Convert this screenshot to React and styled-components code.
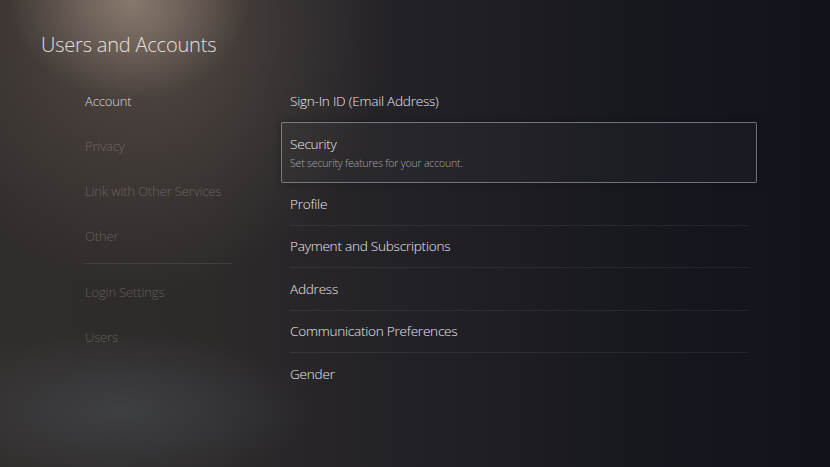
import styled, { createGlobalStyle } from "styled-components"

const Global = createGlobalStyle`
  html, body, #root {
    margin: 0;
    padding: 0;
    height: 100%;
  }
  body {
    background: #15161d;
    font-family: "Open Sans", "Noto Sans", sans-serif;
    -webkit-font-smoothing: antialiased;
  }
`

const navItems = [
  { label: "Account", active: true },
  { label: "Privacy" },
  { label: "Link with Other Services" },
  { label: "Other", divider: true },
  { label: "Login Settings" },
  { label: "Users" },
]

const listItems = [
  { label: "Sign-In ID (Email Address)" },
  { label: "Security", sub: "Set security features for your account.", focused: true },
  { label: "Profile", line: true },
  { label: "Payment and Subscriptions", line: true },
  { label: "Address", line: true },
  { label: "Communication Preferences", line: true },
  { label: "Gender" },
]

export default function App() {
  return (
    <>
      <Global />
      <Screen>
        <Title>Users and Accounts</Title>
        <Body>
          <Nav>
            {navItems.map((n) => (
              <NavGroup key={n.label} $divider={n.divider}>
                <NavItem $active={n.active}>{n.label}</NavItem>
              </NavGroup>
            ))}
          </Nav>
          <List>
            {listItems.map((it) =>
              it.focused ? (
                <FocusBox key={it.label}>
                  <RowLabel>{it.label}</RowLabel>
                  <RowSub>{it.sub}</RowSub>
                </FocusBox>
              ) : (
                <Row key={it.label} $line={it.line}>
                  <RowLabel>{it.label}</RowLabel>
                </Row>
              )
            )}
          </List>
        </Body>
      </Screen>
    </>
  )
}

const Screen = styled.div`
  position: relative;
  width: 830px;
  height: 467px;
  overflow: hidden;
  box-sizing: border-box;
  padding: 31px 0 0 41px;
  background:
    radial-gradient(ellipse 190px 80px at 120px 410px, rgba(78, 84, 92, 0.5), rgba(78, 84, 92, 0) 100%),
    radial-gradient(ellipse 120px 100px at 130px 0px, rgba(175, 155, 140, 0.6), rgba(175, 155, 140, 0) 100%),
    radial-gradient(ellipse 240px 260px at 150px 30px, rgba(125, 108, 96, 0.45), rgba(125, 108, 96, 0) 100%),
    linear-gradient(90deg, #312d2c 0%, #2d2a2a 25%, #222127 50%, #18191f 75%, #11131b 100%);
`

const Title = styled.h1`
  margin: 0;
  font-size: 20px;
  line-height: 28px;
  font-weight: 300;
  color: #e4e0dc;
  letter-spacing: -0.2px;
`

const Body = styled.div`
  display: grid;
  grid-template-columns: 196px 476px;
  margin: 21px 0 0 44px;
`

const Nav = styled.div`
  display: flex;
  flex-direction: column;
  margin-top: -2px;
`

const NavGroup = styled.div`
  width: 147px;
  ${(p) => p.$divider && `
    padding-bottom: 5px;
    margin-bottom: 5px;
    border-bottom: 1px solid rgba(255, 255, 255, 0.09);
  `}
`

const NavItem = styled.div`
  height: 45px;
  display: flex;
  align-items: center;
  font-size: 13px;
  font-weight: 300;
  letter-spacing: -0.15px;
  white-space: nowrap;
  color: ${(p) => (p.$active ? "#dcd8d4" : "rgba(205, 196, 190, 0.34)")};
`

const List = styled.div`
  display: flex;
  flex-direction: column;
`

const Row = styled.div`
  height: 42.4px;
  margin: 0 9px;
  display: flex;
  align-items: center;
  box-sizing: border-box;
  border-bottom: 1px solid ${(p) => (p.$line ? "rgba(255, 255, 255, 0.07)" : "transparent")};
`

const FocusBox = styled.div`
  height: 61px;
  box-sizing: border-box;
  padding: 12px 8px 0;
  border: 1px solid rgba(170, 174, 184, 0.6);
  border-radius: 2px;
  background: rgba(255, 255, 255, 0.025);
  box-shadow: 0 0 6px rgba(0, 0, 0, 0.35);
`

const RowLabel = styled.div`
  font-size: 13.6px;
  line-height: 18px;
  font-weight: 300;
  letter-spacing: -0.25px;
  color: #e8e8ea;
  white-space: nowrap;
`

const RowSub = styled.div`
  margin-top: 3px;
  font-size: 10.6px;
  line-height: 14px;
  font-weight: 300;
  letter-spacing: -0.2px;
  color: #a8a8ac;
`
